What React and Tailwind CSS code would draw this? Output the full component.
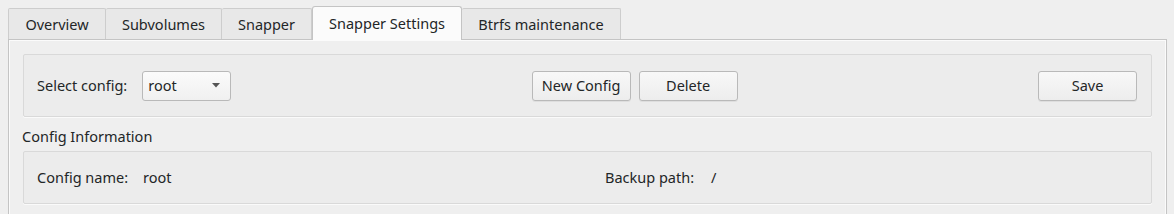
export default function App() {
  const tabs = [
    { label: "Overview", w: "w-[98px]" },
    { label: "Subvolumes", w: "w-[116px]" },
    { label: "Snapper", w: "w-[90px]" },
    { label: "Snapper Settings", w: "w-[150px]", active: true },
    { label: "Btrfs maintenance", w: "w-[159px]" },
  ];
  const btn =
    "h-[30px] w-[99px] rounded-[3px] border border-[#b9b9b9] bg-gradient-to-b from-[#f8f8f8] to-[#ededed] text-[#232627] shadow-[0_1px_0_rgba(0,0,0,0.06)] flex items-center justify-center";
  return (
    <div
      className="w-[1174px] h-[214px] overflow-hidden bg-[#efefef] text-[14.5px] text-[#232627]"
      style={{ fontFamily: '"Noto Sans", "DejaVu Sans", sans-serif' }}
    >
      {/* tab bar */}
      <div className="flex items-end pl-[8px] h-[39px] relative z-10">
        {tabs.map((t) =>
          t.active ? (
            <div
              key={t.label}
              className={`${t.w} h-[34px] -mb-[1px] bg-[#fbfbfb] border border-b-0 border-[#c4c4c4] rounded-t-[3px] flex items-center justify-center`}
            >
              {t.label}
            </div>
          ) : (
            <div
              key={t.label}
              className={`${t.w} h-[31px] pt-[1px] bg-[#e8e8e8] border border-[#cdcdcd] border-l-0 first:border-l border-b-0 rounded-t-[2px] flex items-center justify-center`}
            >
              {t.label}
            </div>
          )
        )}
      </div>
      {/* pane */}
      <div className="ml-[8px] w-[1159px] h-[180px] border-l border-r border-t border-[#c4c4c4] bg-[#efefef] shadow-[inset_1px_1px_0_#fbfbfb,inset_-1px_0_0_#fbfbfb] px-[14px] pt-[14px]">
        {/* group box 1 */}
        <div className="h-[63px] rounded-[2px] border border-[#d9d9d9] bg-[#ececec] shadow-[0_1px_0_#fafafa] flex items-center pl-[13px] pr-[14px] gap-[6px]">
          <span className="mr-[9px]">Select config:</span>
          <div className="h-[30px] w-[89px] rounded-[3px] border border-[#b9b9b9] bg-gradient-to-b from-[#fbfbfb] to-[#f0f0f0] flex items-center pl-[5px] pr-[10px] justify-between">
            <span>root</span>
            <svg width="8" height="5" viewBox="0 0 8 5">
              <path d="M0 0 L8 0 L4 4.5 Z" fill="#555" />
            </svg>
          </div>
          <div className="flex-1" />
          <div className={btn}>New Config</div>
          <div className={`${btn} ml-[2px]`}>Delete</div>
          <div className="flex-1" />
          <div className={btn}>Save</div>
        </div>
        {/* label */}
        <div className="h-[34px] pt-[6px] flex items-center -ml-[1px]">Config Information</div>
        {/* group box 2 */}
        <div className="h-[53px] rounded-[2px] border border-[#d9d9d9] bg-[#ececec] shadow-[0_1px_0_#fafafa] flex items-center pl-[13px]">
          <div className="w-[568px] flex">
            <span className="w-[106px]">Config name:</span>
            <span>root</span>
          </div>
          <div className="flex">
            <span className="w-[106px]">Backup path:</span>
            <span>/</span>
          </div>
        </div>
      </div>
    </div>
  );
}
